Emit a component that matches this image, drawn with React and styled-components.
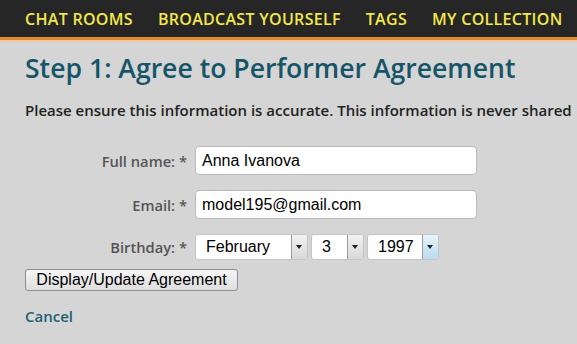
import styled, { createGlobalStyle } from "styled-components";

const GlobalStyle = createGlobalStyle`
  html, body {
    margin: 0;
    padding: 0;
    background: #d5d5d5;
  }
  body {
    font-family: "Open Sans", "DejaVu Sans", sans-serif;
    overflow: hidden;
  }
`;

const navItems = ["CHAT ROOMS", "BROADCAST YOURSELF", "TAGS", "MY COLLECTION"];

const App = () => {
  return (
    <Page>
      <GlobalStyle />
      <NavBar>
        {navItems.map((item) => (
          <NavLink key={item}>{item}</NavLink>
        ))}
      </NavBar>
      <Content>
        <Title>Step 1: Agree to Performer Agreement</Title>
        <Intro>
          Please ensure this information is accurate. This information is never shared
        </Intro>
        <Form>
          <Label>Full name: *</Label>
          <TextInput defaultValue="Anna Ivanova" />
          <Label>Email: *</Label>
          <TextInput defaultValue="model195@gmail.com" />
          <Label>Birthday: *</Label>
          <Selects>
            <FakeSelect $width={113}>
              <SelectValue>February</SelectValue>
              <Arrow />
            </FakeSelect>
            <FakeSelect $width={53}>
              <SelectValue>3</SelectValue>
              <Arrow />
            </FakeSelect>
            <FakeSelect $width={72}>
              <SelectValue>1997</SelectValue>
              <Arrow $active />
            </FakeSelect>
          </Selects>
        </Form>
        <Button type="button">Display/Update Agreement</Button>
        <CancelLink href="#">Cancel</CancelLink>
      </Content>
    </Page>
  );
};

export default App;

const Page = styled.div`
  width: 577px;
  height: 344px;
`;

const NavBar = styled.nav`
  display: flex;
  align-items: center;
  gap: 25px;
  height: 37px;
  padding-left: 25px;
  background: #262626;
  border-bottom: 3px solid #df8a2c;
  box-shadow: 0 2px 0 #efc7a0;
`;

const NavLink = styled.span`
  color: #f3e74c;
  font-size: 16px;
  font-weight: 600;
  letter-spacing: 0.3px;
  white-space: nowrap;
`;

const Content = styled.main`
  padding: 0 25px;
`;

const Title = styled.h1`
  margin: 10px 0 0;
  color: #165468;
  font-size: 26.6px;
  font-weight: 600;
  line-height: 36px;
  white-space: nowrap;
`;

const Intro = styled.p`
  margin: 14px 0 0;
  color: #222;
  font-size: 15px;
  font-weight: 600;
  line-height: 20px;
  white-space: nowrap;
`;

const Form = styled.div`
  display: grid;
  grid-template-columns: 162px 1fr;
  column-gap: 8px;
  row-gap: 15px;
  align-items: center;
  margin-top: 26px;
`;

const Label = styled.span`
  text-align: right;
  color: #555;
  font-size: 14.7px;
  font-weight: 600;
`;

const TextInput = styled.input`
  box-sizing: border-box;
  width: 282px;
  height: 29px;
  padding: 0 6px;
  border: 1px solid #b9b9b9;
  border-radius: 4px;
  background: #fff;
  font-family: "Liberation Sans", Arial, sans-serif;
  font-size: 16px;
  color: #000;
  outline: none;
`;

const Selects = styled.div`
  display: flex;
  gap: 3px;
`;

const FakeSelect = styled.div`
  box-sizing: border-box;
  display: flex;
  align-items: stretch;
  width: ${(p) => p.$width}px;
  height: 26px;
  border: 1px solid #c4c4c4;
  border-radius: 3px;
  background: #fff;
  overflow: hidden;
`;

const SelectValue = styled.span`
  flex: 1;
  display: flex;
  align-items: center;
  padding-left: 10px;
  font-family: "Liberation Sans", Arial, sans-serif;
  font-size: 16px;
  color: #000;
`;

const Arrow = styled.span`
  position: relative;
  width: 15px;
  border-left: 1px solid #9a9a9a;
  background: ${(p) =>
    p.$active
      ? "linear-gradient(#e8f4fb, #b9dcf1)"
      : "linear-gradient(#f2f2f2, #d9d9d9)"};
  &::after {
    content: "";
    position: absolute;
    left: 4px;
    top: 10px;
    border-left: 3px solid transparent;
    border-right: 3px solid transparent;
    border-top: 4px solid #222;
  }
`;

const Button = styled.button`
  display: block;
  box-sizing: border-box;
  width: 213px;
  height: 22px;
  margin-top: 9px;
  padding: 0;
  border: 1px solid #8f8f8f;
  border-radius: 3px;
  background: linear-gradient(#f6f6f6, #dedede);
  font-family: "Liberation Sans", Arial, sans-serif;
  font-size: 16px;
  color: #000;
`;

const CancelLink = styled.a`
  display: inline-block;
  margin-top: 15px;
  color: #1f5f73;
  font-size: 15px;
  font-weight: 600;
  text-decoration: none;
`;
